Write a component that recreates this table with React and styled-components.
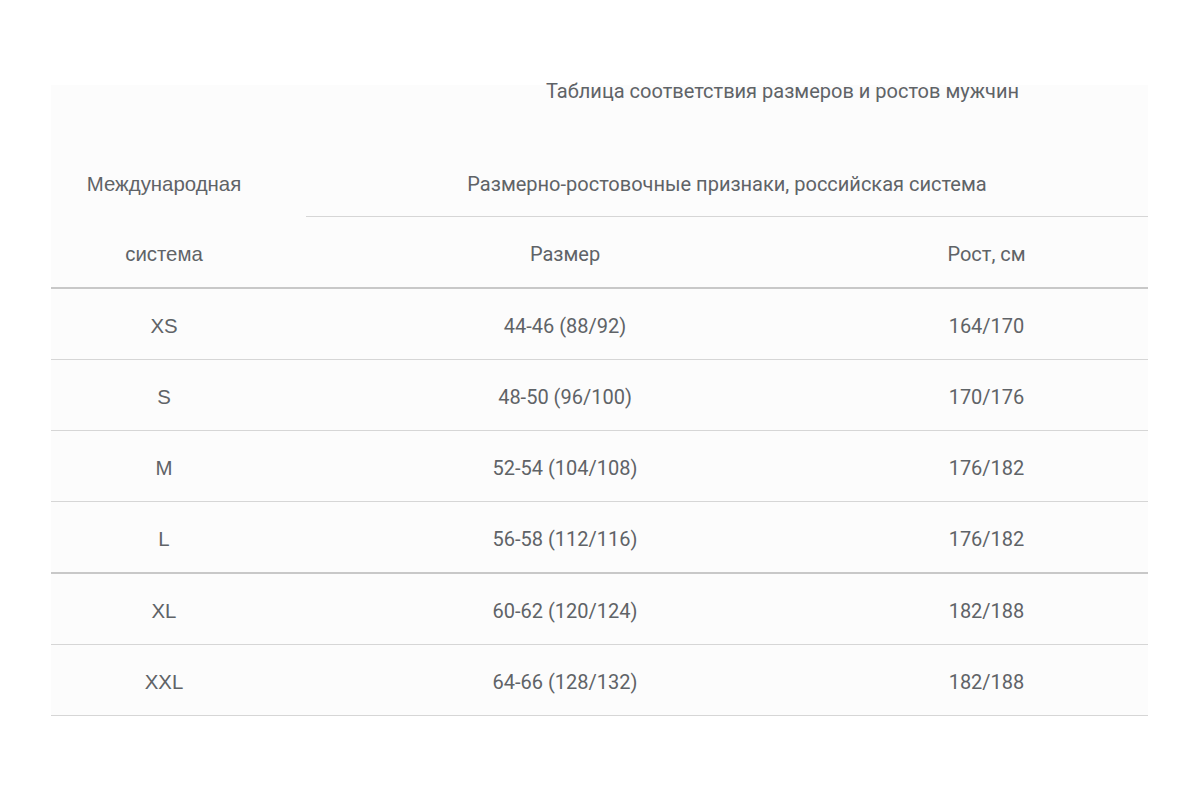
import React from "react";
import styled, { createGlobalStyle } from "styled-components";

const Global = createGlobalStyle`
  html, body { margin: 0; padding: 0; background: #ffffff; }
  body { font-family: Roboto, "Noto Sans", sans-serif; }
`;

const Page = styled.div`
  width: 1200px;
  height: 800px;
  padding: 85px 52px 0 51px;
  box-sizing: border-box;
`;

const Panel = styled.section`
  background: #fcfcfc;
  color: #5f6367;
`;

const Title = styled.h2`
  margin: 0;
  padding-left: 366px;
  height: 63px;
  font-family: Roboto, sans-serif;
  font-weight: 400;
  font-size: 20px;
  line-height: 12px;
  text-align: center;
`;

const Row = styled.div`
  display: grid;
  grid-template-columns: 226px 576px 1fr;
  align-items: center;
  height: ${(p) => p.$h || 70}px;
  border-bottom: ${(p) => (p.$thick ? "2px solid #c8c8c8" : p.$noLine ? "none" : "1px solid #d6d6d6")};
`;

const Cell = styled.div`
  text-align: center;
  font-family: ${(p) => (p.$intl ? '"Liberation Sans", Arial, sans-serif' : "Roboto, sans-serif")};
  font-size: ${(p) => (p.$intl ? 20.4 : 20)}px;
  line-height: 22px;
  padding-top: 3px;
  padding-right: ${(p) => (p.$last ? 28 : 0)}px;
`;

const GroupCell = styled.div`
  grid-column: 2 / 4;
  margin-left: 29px;
  height: 100%;
  display: flex;
  align-items: center;
  justify-content: center;
  padding-top: 3px;
  border-bottom: 1px solid #d6d6d6;
  font-family: Roboto, sans-serif;
  font-size: 20px;
  line-height: 22px;
  box-sizing: border-box;
`;

const rows = [
  ["XS", "44-46 (88/92)", "164/170"],
  ["S", "48-50 (96/100)", "170/176"],
  ["M", "52-54 (104/108)", "176/182"],
  ["L", "56-58 (112/116)", "176/182", true],
  ["XL", "60-62 (120/124)", "182/188"],
  ["XXL", "64-66 (128/132)", "182/188"],
];

export default function App() {
  return (
    <>
      <Global />
      <Page>
        <Panel>
          <Title>Таблица соответствия размеров и ростов мужчин</Title>
          <Row $h={69} $noLine>
            <Cell $intl>Международная</Cell>
            <GroupCell>Размерно-ростовочные признаки, российская система</GroupCell>
          </Row>
          <Row $h={70} $thick>
            <Cell $intl>система</Cell>
            <Cell>Размер</Cell>
            <Cell $last>Рост, см</Cell>
          </Row>
          {rows.map(([intl, size, height, thick]) => (
            <Row key={intl} $h={70} $thick={thick}>
              <Cell $intl>{intl}</Cell>
              <Cell>{size}</Cell>
              <Cell $last>{height}</Cell>
            </Row>
          ))}
        </Panel>
      </Page>
    </>
  );
}
